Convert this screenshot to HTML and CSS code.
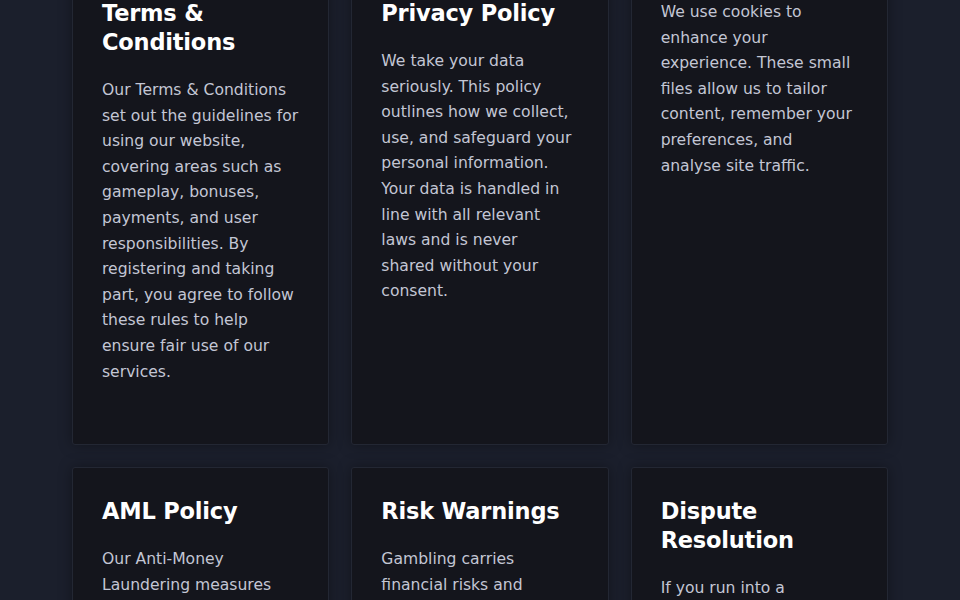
FILE: index.html
```html
<!DOCTYPE html>
<html lang="en">
<head>
    <meta charset="UTF-8">
    <meta name="viewport" content="width=device-width, initial-scale=1.0">
    <title>Policies</title>
    <link rel="stylesheet" href="styles.css">
</head>
<body>
    <section class="policies">
        <div class="policy-grid">
            <article class="policy-card">
                <h2>Terms &amp; Conditions</h2>
                <p>Our Terms &amp; Conditions set out the guidelines for using our website, covering areas such as gameplay, bonuses, payments, and user responsibilities. By registering and taking part, you agree to follow these rules to help ensure fair use of our services.</p>
            </article>
            <article class="policy-card">
                <h2>Privacy Policy</h2>
                <p>We take your data seriously. This policy outlines how we collect, use, and safeguard your personal information. Your data is handled in line with all relevant laws and is never<br>shared without your consent.</p>
            </article>
            <article class="policy-card policy-card--raised">
                <h2>Cookie Policy</h2>
                <p>We use cookies to enhance your experience. These small files allow us to tailor content, remember your preferences, and<br>analyse site traffic.</p>
            </article>
            <article class="policy-card">
                <h2>AML Policy</h2>
                <p>Our Anti-Money Laundering measures help us detect and prevent financial crime. We verify identities and monitor transactions to keep our platform safe.</p>
            </article>
            <article class="policy-card">
                <h2>Risk Warnings</h2>
                <p>Gambling carries financial risks and should always be approached responsibly. Only play with money you can afford to lose.</p>
            </article>
            <article class="policy-card">
                <h2>Dispute Resolution</h2>
                <p>If you run into a disagreement, our support team is here to help resolve it quickly and fairly.</p>
            </article>
        </div>
    </section>
</body>
</html>
```

FILE: styles.css
```css
body {
    font-family: 'DejaVu Sans', sans-serif;
    background: #1b1f2c;
    margin: 0;
    color: #c3c6d4;
}
.policies {
    max-width: 816px;
    margin: -31px auto 0;
}
.policy-grid {
    display: grid;
    grid-template-columns: repeat(3, 1fr);
    gap: 22px;
}
.policy-card {
    background: #14151c;
    border: 1px solid #232733;
    border-radius: 3px;
    padding: 29px 29px 59px;
    box-shadow: 0 0 14px rgba(0, 0, 0, 0.35);
}
.policy-card--raised {
    margin-top: -49px;
}
.policy-card h2 {
    font-size: 22.5px;
    line-height: 29px;
    font-weight: 700;
    color: #fff;
    margin: 0 0 21px;
    letter-spacing: -0.2px;
}
.policy-card p {
    font-size: 15.6px;
    line-height: 25.6px;
    margin: 0;
}
```
